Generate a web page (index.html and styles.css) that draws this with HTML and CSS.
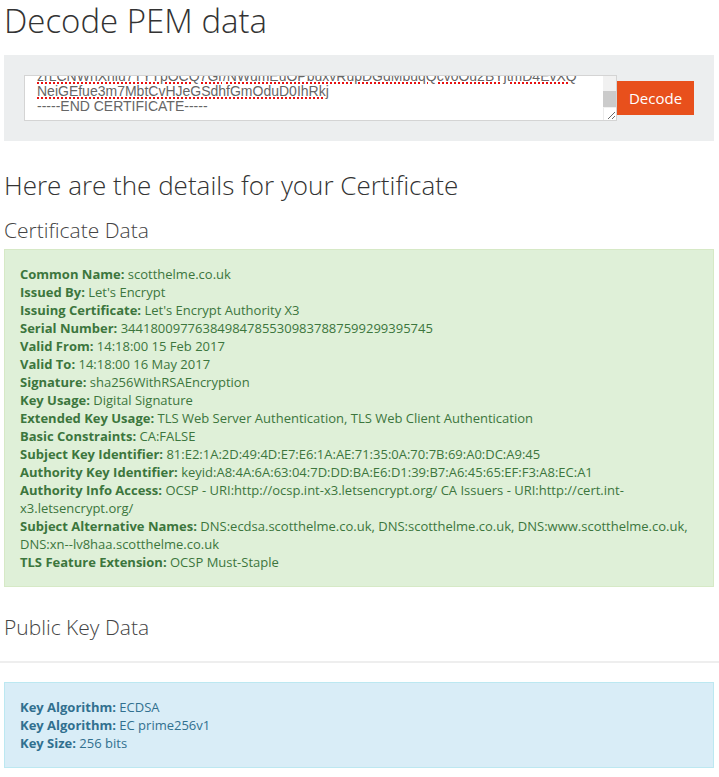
FILE: index.html
```html
<!DOCTYPE html>
<html>
<head>
<meta charset="utf-8">
<title>Decode PEM data</title>
<link rel="stylesheet" href="styles.css">
</head>
<body>
<div class="wrap">
  <h1 class="title">Decode PEM data</h1>
  <div class="panel">
    <div class="textarea">
      <div class="ta-text">
        <div class="ta-lines">
          <div class="ta-line"><span class="sp">zrLCNWhXhiu7TYTpOCQ7Gr</span>/<span class="sp">NWumEuOPbuxvRupDGdMbuqQcv0Ou2BYjtmD4EvXQ</span></div>
          <div class="ta-line"><span class="sp">NeiGEfue3m7MbtCvHJeGSdhfGmOduD0IhRkj</span></div>
          <div class="ta-line">-----END CERTIFICATE-----</div>
        </div>
      </div>
      <div class="ta-scroll">
        <div class="ta-track"><div class="ta-thumb"></div></div>
        <div class="ta-corner">
          <svg width="12" height="12" viewBox="0 0 12 12"><path d="M4 11 L11 4 M8 11 L11 8" stroke="#6b6b6b" stroke-width="1" fill="none"/></svg>
        </div>
      </div>
    </div>
    <button class="btn">Decode</button>
  </div>

  <h2 class="subtitle">Here are the details for your Certificate</h2>
  <h3 class="section">Certificate Data</h3>
  <div class="alert alert-success">
    <div><b>Common Name:</b> scotthelme.co.uk</div>
    <div><b>Issued By:</b> Let's Encrypt</div>
    <div><b>Issuing Certificate:</b> Let's Encrypt Authority X3</div>
    <div><b>Serial Number:</b> 344180097763849847855309837887599299395745</div>
    <div><b>Valid From:</b> 14:18:00 15 Feb 2017</div>
    <div><b>Valid To:</b> 14:18:00 16 May 2017</div>
    <div><b>Signature:</b> sha256WithRSAEncryption</div>
    <div><b>Key Usage:</b> Digital Signature</div>
    <div><b>Extended Key Usage:</b> TLS Web Server Authentication, TLS Web Client Authentication</div>
    <div><b>Basic Constraints:</b> CA:FALSE</div>
    <div><b>Subject Key Identifier:</b> 81:E2:1A:2D:49:4D:E7:E6:1A:AE:71:35:0A:70:7B:69:A0:DC:A9:45</div>
    <div><b>Authority Key Identifier:</b> keyid:A8:4A:6A:63:04:7D:DD:BA:E6:D1:39:B7:A6:45:65:EF:F3:A8:EC:A1</div>
    <div><b>Authority Info Access:</b> OCSP - URI:http://ocsp.int-x3.letsencrypt.org/ CA Issuers - URI:http://cert.int-<br>x3.letsencrypt.org/</div>
    <div><b>Subject Alternative Names:</b> DNS:ecdsa.scotthelme.co.uk, DNS:scotthelme.co.uk, DNS:www.scotthelme.co.uk,<br>DNS:xn--lv8haa.scotthelme.co.uk</div>
    <div><b>TLS Feature Extension:</b> OCSP Must-Staple</div>
  </div>
  <h3 class="section section-pk">Public Key Data</h3>
</div>
<hr class="rule">
<div class="wrap">
  <div class="alert alert-info">
    <div><b>Key Algorithm:</b> ECDSA</div>
    <div><b>Key Algorithm:</b> EC prime256v1</div>
    <div><b>Key Size:</b> 256 bits</div>
  </div>
</div>
</body>
</html>
```

FILE: styles.css
```css
html, body {
  margin: 0;
  padding: 0;
  background: #fff;
}
body {
  font-family: "Open Sans", "DejaVu Sans", sans-serif;
  font-size: 13px;
  line-height: 18px;
  color: #333;
}
.wrap {
  margin: 0 5px 0 4px;
}
.title {
  margin: 0;
  padding-top: 1px;
  font-size: 33px;
  line-height: 40px;
  font-weight: 300;
  color: #333;
}
.panel {
  margin-top: 14px;
  background: #eceeef;
  padding: 20px;
  display: flex;
  align-items: center;
}
.textarea {
  flex: 1;
  height: 44px;
  border: 1px solid #d4d4d4;
  background: #fff;
  display: flex;
  overflow: hidden;
}
.ta-text {
  flex: 1;
  overflow: hidden;
  padding-left: 12px;
}
.ta-lines {
  margin-top: -7px;
}
.ta-line {
  font-family: "Liberation Sans", Arial, sans-serif;
  font-size: 14px;
  line-height: 15px;
  color: #666;
  white-space: nowrap;
}
.sp {
  text-decoration: underline dotted #e81010;
  text-decoration-thickness: 1.5px;
  text-underline-offset: 1px;
}
.ta-scroll {
  width: 13px;
  display: flex;
  flex-direction: column;
}
.ta-track {
  flex: 1;
  background: #f1f1f1;
}
.ta-thumb {
  margin-top: 15px;
  height: 16px;
  background: #cbcbcb;
}
.ta-corner {
  height: 12px;
  background: #fff;
  border-left: 1px solid #ececec;
}
.ta-corner svg {
  display: block;
}
.btn {
  width: 77px;
  height: 34px;
  border: 0;
  background: #e8501c;
  color: #fff;
  font-family: "Open Sans", "DejaVu Sans", sans-serif;
  font-size: 15px;
  padding: 0;
  margin: 0;
}
.subtitle {
  margin: 28px 0 0;
  font-size: 26px;
  line-height: 32px;
  font-weight: 300;
  color: #333;
}
.section {
  margin: 16px 0 0;
  font-size: 21px;
  line-height: 26px;
  font-weight: 300;
  color: #444;
}
.section-pk {
  margin-top: 27px;
}
.alert {
  padding: 15px;
}
.alert b {
  font-weight: 700;
}
.alert-success {
  margin-top: 6px;
  background: #dff0d8;
  border: 1px solid #d6e9c6;
  color: #3c763d;
}
.rule {
  margin: 21px 0 0;
  border: 0;
  border-top: 2px solid #eeeeee;
  height: 0;
}
.alert-info {
  margin-top: 19px;
  background: #d9edf7;
  border: 1px solid #bce8f1;
  color: #31708f;
}
```
